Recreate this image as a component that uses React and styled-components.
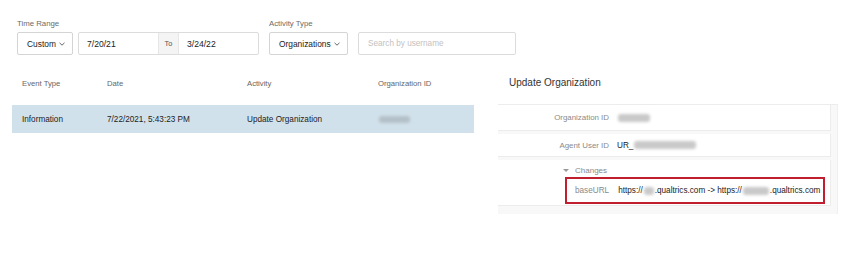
import React from 'react';
import styled, { createGlobalStyle } from 'styled-components';

const Global = createGlobalStyle`
    html, body {
        margin: 0;
        padding: 0;
        background: #fff;
        font-family: "Liberation Sans", Arial, sans-serif;
        color: #222;
    }
    * {
        box-sizing: border-box;
    }
`;

const Page = styled.div`
    width: 850px;
    height: 262px;
    overflow: hidden;
`;

const Filters = styled.div`
    display: flex;
    align-items: flex-end;
    padding: 17px 0 0 17px;
    gap: 10px;
`;

const Field = styled.div`
    display: flex;
    flex-direction: column;
`;

const FieldLabel = styled.div`
    font-size: 7.8px;
    color: #6b6b6b;
    height: 11px;
    line-height: 11px;
    margin-bottom: 4px;
    padding-top: 1px;
`;

const Controls = styled.div`
    display: flex;
    gap: ${p => p.gap || 5}px;
`;

const Select = styled.div`
    display: flex;
    align-items: center;
    justify-content: space-between;
    width: ${p => p.width}px;
    height: 23px;
    padding: 0 7px 0 9px;
    border: 1px solid #d4d4d4;
    border-radius: 2px;
    font-size: 8.4px;
    color: #222;
`;

const DateGroup = styled.div`
    display: flex;
    height: 23px;
    border: 1px solid #dcdcdc;
    border-radius: 2px;
`;

const DateInput = styled.div`
    display: flex;
    align-items: center;
    width: 79px;
    padding-left: 8px;
    font-size: 8.6px;
    color: #222;
`;

const Addon = styled.div`
    display: flex;
    align-items: center;
    justify-content: center;
    width: 21px;
    background: #f4f4f4;
    border-left: 1px solid #e6e6e6;
    border-right: 1px solid #e6e6e6;
    font-size: 7.4px;
    color: #555;
`;

const Search = styled.div`
    display: flex;
    align-items: center;
    width: 158px;
    height: 23px;
    padding-left: 9px;
    border: 1px solid #dcdcdc;
    border-radius: 2px;
    font-size: 8.2px;
    color: #c2c2c2;
`;

const Main = styled.div`
    display: flex;
    margin-top: 17px;
    padding-left: 12px;
`;

const Table = styled.div`
    width: 462px;
`;

const HeadRow = styled.div`
    display: grid;
    grid-template-columns: 85px 140px 131px 1fr;
    height: 22px;
    align-items: center;
    font-size: 7.7px;
    color: #666;
    margin-bottom: 11px;
`;

const BodyRow = styled.div`
    display: grid;
    grid-template-columns: 85px 140px 131px 1fr;
    height: 28px;
    align-items: center;
    font-size: 8.2px;
    color: #222;
    background: ${p => (p.selected ? '#d1e1eb' : 'transparent')};
`;

const Cell = styled.div`
    padding-left: 10px;
    display: flex;
    align-items: center;
    white-space: nowrap;
`;

const Blur = styled.span`
    display: inline-block;
    width: ${p => p.w}px;
    height: ${p => p.h || 8}px;
    background: ${p => p.tone || '#c9c9c9'};
    border-radius: 3px;
    filter: blur(1.4px);
    margin: 0 1px;
`;

const Detail = styled.div`
    width: 340px;
    margin-left: 24px;
`;

const DetailTitle = styled.div`
    height: 22px;
    line-height: 22px;
    padding-left: 11px;
    font-size: 10px;
    color: #333;
    margin-bottom: 10px;
`;

const Panel = styled.div`
    background: #f8f8f8;
    border-top: 1px solid #ececec;
    border-right: 1px solid #efefef;
    padding: 0 6px 8px 0;
    display: flex;
    flex-direction: column;
    gap: 3px;
`;

const Row = styled.div`
    display: flex;
    align-items: center;
    min-height: ${p => p.h}px;
    background: #fff;
    border-bottom: 1px solid #ececec;
    border-right: 1px solid #ececec;
`;

const RowLabel = styled.div`
    width: 111px;
    text-align: right;
    font-size: 7.9px;
    color: #8a8a8a;
`;

const RowValue = styled.div`
    display: flex;
    align-items: center;
    margin-left: 8px;
    font-size: 8.2px;
    color: #222;
`;

const Changes = styled.div`
    display: flex;
    flex-direction: column;
    padding: 5px 5px 1px 64px;
    width: 100%;
`;

const ChangesHead = styled.div`
    display: flex;
    align-items: center;
    gap: 6px;
    height: 11px;
    font-size: 8px;
    color: #8a8a8a;
    margin-bottom: 1px;
`;

const Caret = styled.span`
    width: 0;
    height: 0;
    border-left: 3px solid transparent;
    border-right: 3px solid transparent;
    border-top: 3.5px solid #999;
    margin-left: 1px;
`;

const Highlight = styled.div`
    display: flex;
    align-items: center;
    height: 27px;
    margin-left: 3px;
    padding-left: 8px;
    border: 2px solid #c11f2f;
    font-size: 8.2px;
    color: #222;
    white-space: nowrap;
`;

const KeyName = styled.span`
    color: #8a8a8a;
    margin-right: 9px;
`;

const Chevron = () => (
    <svg width="6" height="4" viewBox="0 0 6 4">
        <polyline points="0.5,0.8 3,3.2 5.5,0.8" fill="none" stroke="#555" strokeWidth="0.9" />
    </svg>
);

const App = () => (
    <Page>
        <Global />
        <Filters>
            <Field>
                <FieldLabel>Time Range</FieldLabel>
                <Controls gap={5}>
                    <Select width={56}>
                        Custom <Chevron />
                    </Select>
                    <DateGroup>
                        <DateInput>7/20/21</DateInput>
                        <Addon>To</Addon>
                        <DateInput>3/24/22</DateInput>
                    </DateGroup>
                </Controls>
            </Field>
            <Field>
                <FieldLabel>Activity Type</FieldLabel>
                <Controls gap={10}>
                    <Select width={79}>
                        Organizations <Chevron />
                    </Select>
                    <Search>Search by username</Search>
                </Controls>
            </Field>
        </Filters>
        <Main>
            <Table>
                <HeadRow>
                    <Cell>Event Type</Cell>
                    <Cell>Date</Cell>
                    <Cell>Activity</Cell>
                    <Cell>Organization ID</Cell>
                </HeadRow>
                <BodyRow selected>
                    <Cell>Information</Cell>
                    <Cell>7/22/2021, 5:43:23 PM</Cell>
                    <Cell>Update Organization</Cell>
                    <Cell>
                        <Blur w={31} h={7} tone="#b4c0c8" />
                    </Cell>
                </BodyRow>
            </Table>
            <Detail>
                <DetailTitle>Update Organization</DetailTitle>
                <Panel>
                    <Row h={26}>
                        <RowLabel>Organization ID</RowLabel>
                        <RowValue>
                            <Blur w={32} />
                        </RowValue>
                    </Row>
                    <Row h={23}>
                        <RowLabel>Agent User ID</RowLabel>
                        <RowValue>
                            UR_<Blur w={62} />
                        </RowValue>
                    </Row>
                    <Row h={46}>
                        <Changes>
                            <ChangesHead>
                                <Caret />
                                Changes
                            </ChangesHead>
                            <Highlight>
                                <KeyName>baseURL</KeyName>
                                https://<Blur w={10} />.qualtrics.com -&gt; https://<Blur w={26} />.qualtrics.com
                            </Highlight>
                        </Changes>
                    </Row>
                </Panel>
            </Detail>
        </Main>
    </Page>
);

export default App;
